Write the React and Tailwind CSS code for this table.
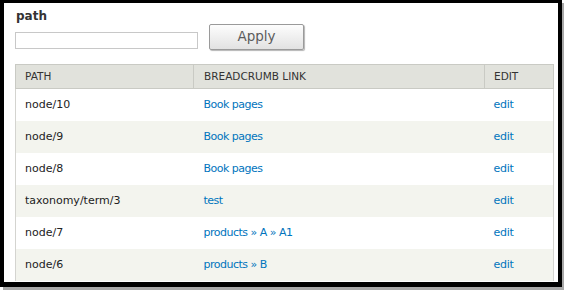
import React from "react";

const rows = [
  { path: "node/10", crumbs: ["Book pages"] },
  { path: "node/9", crumbs: ["Book pages"] },
  { path: "node/8", crumbs: ["Book pages"] },
  { path: "taxonomy/term/3", crumbs: ["test"] },
  { path: "node/7", crumbs: ["products", "A", "A1"] },
  { path: "node/6", crumbs: ["products", "B"] },
];

function Crumbs({ items }) {
  return (
    <span className="tracking-[-0.5px]">
      {items.map((c, i) => (
        <React.Fragment key={i}>
          {i > 0 && <span className="text-[#0074bd]"> » </span>}
          <a className="text-[#0074bd]">{c}</a>
        </React.Fragment>
      ))}
    </span>
  );
}

export default function App() {
  return (
    <div className="w-[564px] h-[290px] bg-white overflow-hidden" style={{ fontFamily: '"DejaVu Sans", Verdana, sans-serif' }}>
      <div className="w-[562px] h-[287px] border-black border-l-4 border-t-[3px] border-r-4 border-b-[5px] shadow-[3px_3px_0_#a8a8a8] bg-white overflow-hidden">
        <div className="pl-[11px] pr-[5px] pt-[5px]">
          <div className="pl-px text-[12px] font-bold text-[#333] leading-[16px]">path</div>
          <div className="flex items-start">
            <input className="mt-[8px] w-[183px] h-[17px] border border-[#c8c8c8] bg-white outline-none" />
            <button className="ml-[11px] w-[95px] h-[26px] border border-[#9a9a9a] rounded-[2px] bg-gradient-to-b from-[#fdfdfd] to-[#e2e2e2] shadow-[1px_1px_1px_#b5b5b5] text-[13.5px] text-[#5c5c5c] leading-none">
              Apply
            </button>
          </div>
          <table className="mt-[14px] w-[538px] border-collapse table-fixed text-[11px]">
            <colgroup>
              <col className="w-[178px]" />
              <col className="w-[291px]" />
              <col className="w-[69px]" />
            </colgroup>
            <thead>
              <tr className="h-[24px] bg-[#e1e2dc] text-[#333] text-[10.5px]">
                <th className="text-left font-normal pl-[9px] border border-[#c9cac4]">PATH</th>
                <th className="text-left font-normal pl-[10px] border border-[#c9cac4]">BREADCRUMB LINK</th>
                <th className="text-left font-normal pl-[9px] border border-[#c9cac4]">EDIT</th>
              </tr>
            </thead>
            <tbody>
              {rows.map((r, i) => (
                <tr key={i} className={`h-[32px] ${i % 2 ? "bg-[#f3f4ee]" : "bg-white"}`}>
                  <td className="pl-[9px] pt-px text-[#222] border-l border-[#d4d4d0]">{r.path}</td>
                  <td className="pl-[10px] pt-px">
                    <Crumbs items={r.crumbs} />
                  </td>
                  <td className="pl-[9px] pt-px border-r border-[#d4d4d0]">
                    <a className="text-[#0074bd] tracking-[-0.3px]">edit</a>
                  </td>
                </tr>
              ))}
            </tbody>
          </table>
        </div>
      </div>
    </div>
  );
}
